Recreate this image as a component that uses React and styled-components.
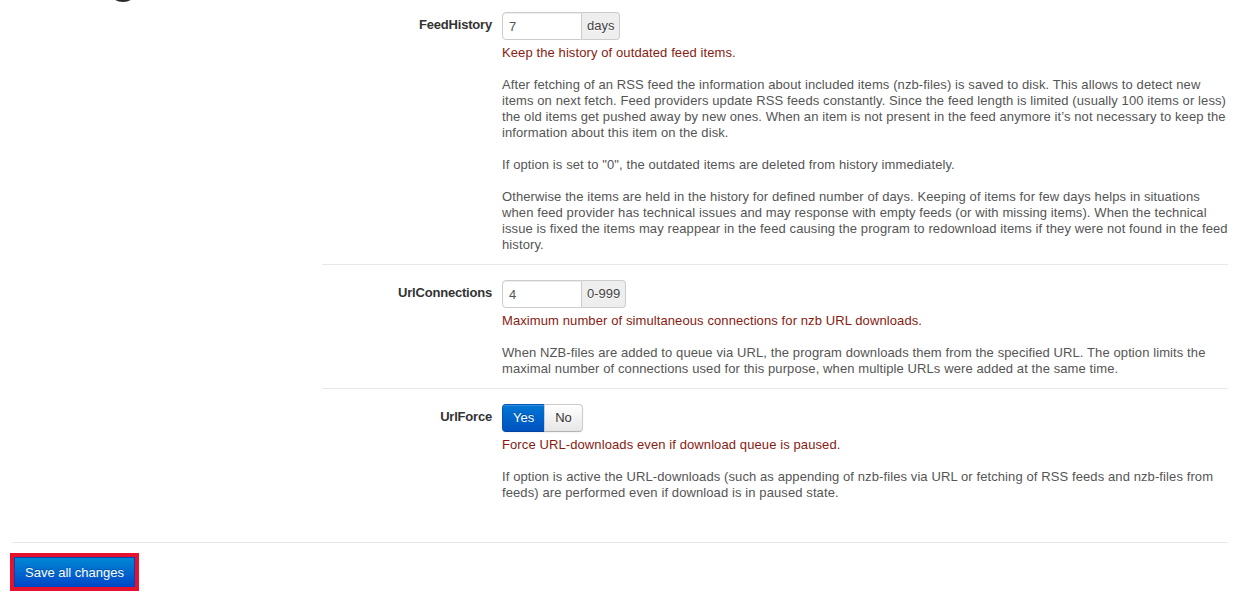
import React from 'react';
import styled, { createGlobalStyle } from 'styled-components';

const GlobalStyle = createGlobalStyle`
  html, body {
    margin: 0;
    padding: 0;
    background: #ffffff;
  }
  body {
    font-family: "Liberation Sans", Arial, sans-serif;
    font-size: 13px;
    line-height: 16px;
    color: #333333;
  }
`;

const Page = styled('div')`
  position: relative;
  width: 100%;
  padding: 0 9px 4px 12px;
  box-sizing: border-box;
  overflow: hidden;
`;

const Blob = styled('div')`
  position: absolute;
  left: 112px;
  top: -11px;
  width: 22px;
  height: 13px;
  border-radius: 50%;
  background: #2a2a2a;
`;

const Section = styled('div')`
  margin-left: 310px;
  padding-bottom: 30px;
`;

const Row = styled('div')`
  display: grid;
  grid-template-columns: 170px 1fr;
  column-gap: 10px;
  padding: ${p => (p.$first ? '12px' : '15px')} 0 11px 0;
  border-top: ${p => (p.$first ? 'none' : '1px solid #e8e8e8')};
`;

const Label = styled('div')`
  text-align: right;
  font-weight: bold;
  padding-top: 5px;
  letter-spacing: -0.2px;
  color: #333333;
`;

const Controls = styled('div')`
  display: flex;
  flex-direction: column;
  align-items: flex-start;
  min-width: 0;
`;

const InputGroup = styled('div')`
  display: flex;
  height: 28px;
`;

const Input = styled('input')`
  width: 80px;
  height: 28px;
  box-sizing: border-box;
  padding: 4px 6px;
  border: 1px solid #cccccc;
  border-radius: 4px 0 0 4px;
  font-family: inherit;
  font-size: 13px;
  color: #555555;
  background: #ffffff;
  box-shadow: inset 0 1px 1px rgba(0, 0, 0, 0.075);
  outline: none;
`;

const AddOn = styled('span')`
  display: flex;
  align-items: center;
  padding: 0 5px;
  border: 1px solid #cccccc;
  border-left: none;
  border-radius: 0 4px 4px 0;
  background: #eeeeee;
  color: #444444;
  text-shadow: 0 1px 0 #ffffff;
`;

const Toggle = styled('div')`
  display: flex;
  height: 28px;
`;

const ToggleButton = styled('button')`
  height: 28px;
  padding: 0 10px;
  font-family: inherit;
  font-size: 13px;
  line-height: 16px;
  cursor: pointer;
  border: 1px solid ${p => (p.$active ? '#0055b3' : '#cccccc')};
  border-bottom-color: ${p => (p.$active ? '#0044a0' : '#b3b3b3')};
  color: ${p => (p.$active ? '#ffffff' : '#333333')};
  background: ${p =>
    p.$active
      ? 'linear-gradient(to bottom, #0077d4, #0052c0)'
      : 'linear-gradient(to bottom, #ffffff, #e6e6e6)'};
  text-shadow: ${p => (p.$active ? '0 -1px 0 rgba(0,0,0,0.25)' : '0 1px 1px rgba(255,255,255,0.75)')};
  box-shadow: inset 0 1px 0 rgba(255, 255, 255, 0.2), 0 1px 2px rgba(0, 0, 0, 0.05);
  border-radius: ${p => (p.$left ? '4px 0 0 4px' : '0 4px 4px 0')};
  margin-left: ${p => (p.$left ? '0' : '-1px')};
`;

const Help = styled('div')`
  margin-top: 5px;
  color: #555555;
  letter-spacing: 0.1px;
`;

const Lead = styled('p')`
  margin: 0;
  color: #871b12;
`;

const Para = styled('p')`
  margin: 16px 0 0 0;
`;

const Footer = styled('div')`
  border-top: 1px solid #e8e8e8;
  padding-top: 14px;
`;

const SaveButton = styled('button')`
  margin-left: 2px;
  height: 30px;
  padding: 0 10px;
  font-family: inherit;
  font-size: 13px;
  color: #ffffff;
  border: 1px solid #0046b8;
  border-radius: 0;
  background: linear-gradient(to bottom, #0088d4, #0048c8);
  text-shadow: 0 -1px 0 rgba(0, 0, 0, 0.25);
  outline: 4px solid #e8112d;
  cursor: pointer;
`;

const options = [
  {
    name: 'FeedHistory',
    type: 'number',
    value: '7',
    unit: 'days',
    lead: 'Keep the history of outdated feed items.',
    text: [
      'After fetching of an RSS feed the information about included items (nzb-files) is saved to disk. This allows to detect new items on next fetch. Feed providers update RSS feeds constantly. Since the feed length is limited (usually 100 items or less) the old items get pushed away by new ones. When an item is not present in the feed anymore it\u2019s not necessary to keep the information about this item on the disk.',
      'If option is set to "0", the outdated items are deleted from history immediately.',
      'Otherwise the items are held in the history for defined number of days. Keeping of items for few days helps in situations when feed provider has technical issues and may response with empty feeds (or with missing items). When the technical issue is fixed the items may reappear in the feed causing the program to redownload items if they were not found in the feed history.',
    ],
  },
  {
    name: 'UrlConnections',
    type: 'number',
    value: '4',
    unit: '0-999',
    lead: 'Maximum number of simultaneous connections for nzb URL downloads.',
    text: [
      'When NZB-files are added to queue via URL, the program downloads them from the specified URL. The option limits the maximal number of connections used for this purpose, when multiple URLs were added at the same time.',
    ],
  },
  {
    name: 'UrlForce',
    type: 'switch',
    value: 'yes',
    lead: 'Force URL-downloads even if download queue is paused.',
    text: [
      'If option is active the URL-downloads (such as appending of nzb-files via URL or fetching of RSS feeds and nzb-files from feeds) are performed even if download is in paused state.',
    ],
  },
];

const OptionRow = ({ option, first }) => (
  <Row $first={first}>
    <Label>{option.name}</Label>
    <Controls>
      {option.type === 'switch' ? (
        <Toggle>
          <ToggleButton $left $active={option.value === 'yes'}>Yes</ToggleButton>
          <ToggleButton $active={option.value === 'no'}>No</ToggleButton>
        </Toggle>
      ) : (
        <InputGroup>
          <Input defaultValue={option.value} />
          <AddOn>{option.unit}</AddOn>
        </InputGroup>
      )}
      <Help>
        <Lead>{option.lead}</Lead>
        {option.text.map((t, i) => (
          <Para key={i}>{t}</Para>
        ))}
      </Help>
    </Controls>
  </Row>
);

export default function App() {
  return (
    <Page>
      <GlobalStyle />
      <Blob />
      <Section>
        {options.map((o, i) => (
          <OptionRow key={o.name} option={o} first={i === 0} />
        ))}
      </Section>
      <Footer>
        <SaveButton>Save all changes</SaveButton>
      </Footer>
    </Page>
  );
}
